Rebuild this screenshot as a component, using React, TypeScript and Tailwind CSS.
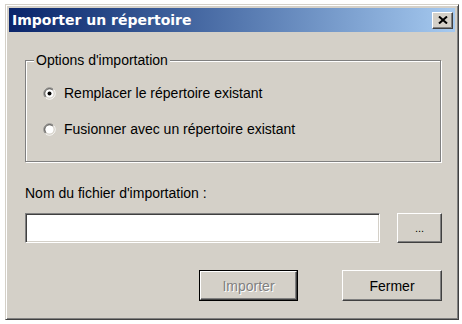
const face = "bg-[#d4d0c8]";

function Radio({ checked }: { checked?: boolean }) {
  return (
    <svg width="13" height="13" viewBox="0 0 13 13" className="shrink-0">
      <path d="M10.5 2.5 A5.5 5.5 0 0 0 2.5 10.5" fill="none" stroke="#808080" strokeWidth="1" />
      <path d="M2.5 10.5 A5.5 5.5 0 0 0 10.5 2.5" fill="none" stroke="#ffffff" strokeWidth="1" />
      <path d="M9.8 3.2 A4.5 4.5 0 0 0 3.2 9.8" fill="none" stroke="#404040" strokeWidth="1" />
      <path d="M3.2 9.8 A4.5 4.5 0 0 0 9.8 3.2" fill="none" stroke="#d4d0c8" strokeWidth="1" />
      <circle cx="6.5" cy="6.5" r="4" fill="#ffffff" />
      {checked && <circle cx="6.5" cy="6.5" r="2" fill="#000000" />}
    </svg>
  );
}

function Button({
  children,
  isDefault,
  disabled,
  className = "",
}: {
  children: React.ReactNode;
  isDefault?: boolean;
  disabled?: boolean;
  className?: string;
}) {
  const inner = (
    <div
      className={`flex h-full w-full items-center justify-center border border-t-white border-l-white border-r-[#404040] border-b-[#404040] shadow-[inset_-1px_-1px_0_#808080] ${face} ${
        disabled ? "text-[#808080] [text-shadow:1px_1px_0_#fff]" : "text-black"
      }`}
    >
      {children}
    </div>
  );
  if (isDefault) {
    return <div className={`border border-black ${className}`}>{inner}</div>;
  }
  return <div className={className}>{inner}</div>;
}

export default function App() {
  return (
    <div className="min-h-screen bg-white pt-[4px] pl-[5px] font-['Liberation_Sans',Arial,sans-serif] text-[14px] leading-[16px] text-black">
      <div
        className={`flex h-[316px] w-[454px] flex-col border border-t-[#d4d0c8] border-l-[#d4d0c8] border-r-[#404040] border-b-[#404040] p-[3px] shadow-[inset_1px_1px_0_#fff,inset_-1px_-1px_0_#808080] ${face}`}
      >
        {/* title bar */}
        <div className="flex h-[24px] items-center justify-between bg-gradient-to-r from-[#0a246a] to-[#a6caf0] pl-[3px] pr-[2px]">
          <span className="font-['DejaVu_Sans',sans-serif] text-[14px] font-bold text-white">
            Importer un répertoire
          </span>
          <div
            className={`flex h-[17px] w-[21px] items-center justify-center border border-t-white border-l-white border-r-[#404040] border-b-[#404040] shadow-[inset_-1px_-1px_0_#808080] ${face}`}
          >
            <svg width="10" height="8" viewBox="0 0 10 8">
              <path d="M1 0.5 L9 7.5 M9 0.5 L1 7.5" stroke="#000" strokeWidth="2" />
            </svg>
          </div>
        </div>

        <div className="flex flex-1 flex-col pl-[16px] pr-[13px]">
          {/* options group */}
          <div className="relative mr-[1px] mt-[28px] flex flex-col gap-[20px] border border-[#808080] pt-[24px] pb-[24px] shadow-[inset_1px_1px_0_#fff,1px_1px_0_#fff]">
            <span className={`absolute -top-[9px] left-[8px] px-[2px] ${face}`}>
              Options d'importation
            </span>
            <label className="flex h-[16px] items-center gap-[8px] pl-[17px]">
              <Radio checked />
              <span>Remplacer le répertoire existant</span>
            </label>
            <label className="flex h-[16px] items-center gap-[8px] pl-[17px]">
              <Radio />
              <span>Fusionner avec un répertoire existant</span>
            </label>
          </div>

          <div className="mt-[23px] h-[16px]">Nom du fichier d'importation :</div>

          <div className="mt-[12px] flex h-[30px] gap-[17px]">
            <div className="flex-1 border border-t-[#808080] border-l-[#808080] border-r-white border-b-white bg-white shadow-[inset_1px_1px_0_#404040,inset_-1px_-1px_0_#d4d0c8]" />
            <Button className="h-[30px] w-[45px]">
              <span className="text-[11px] leading-none">...</span>
            </Button>
          </div>

          <div className="mt-[27px] flex h-[31px] justify-end gap-[44px]">
            <Button isDefault disabled className="h-[31px] w-[99px]">
              Importer
            </Button>
            <Button className="h-[31px] w-[100px]">Fermer</Button>
          </div>
        </div>
      </div>
    </div>
  );
}
